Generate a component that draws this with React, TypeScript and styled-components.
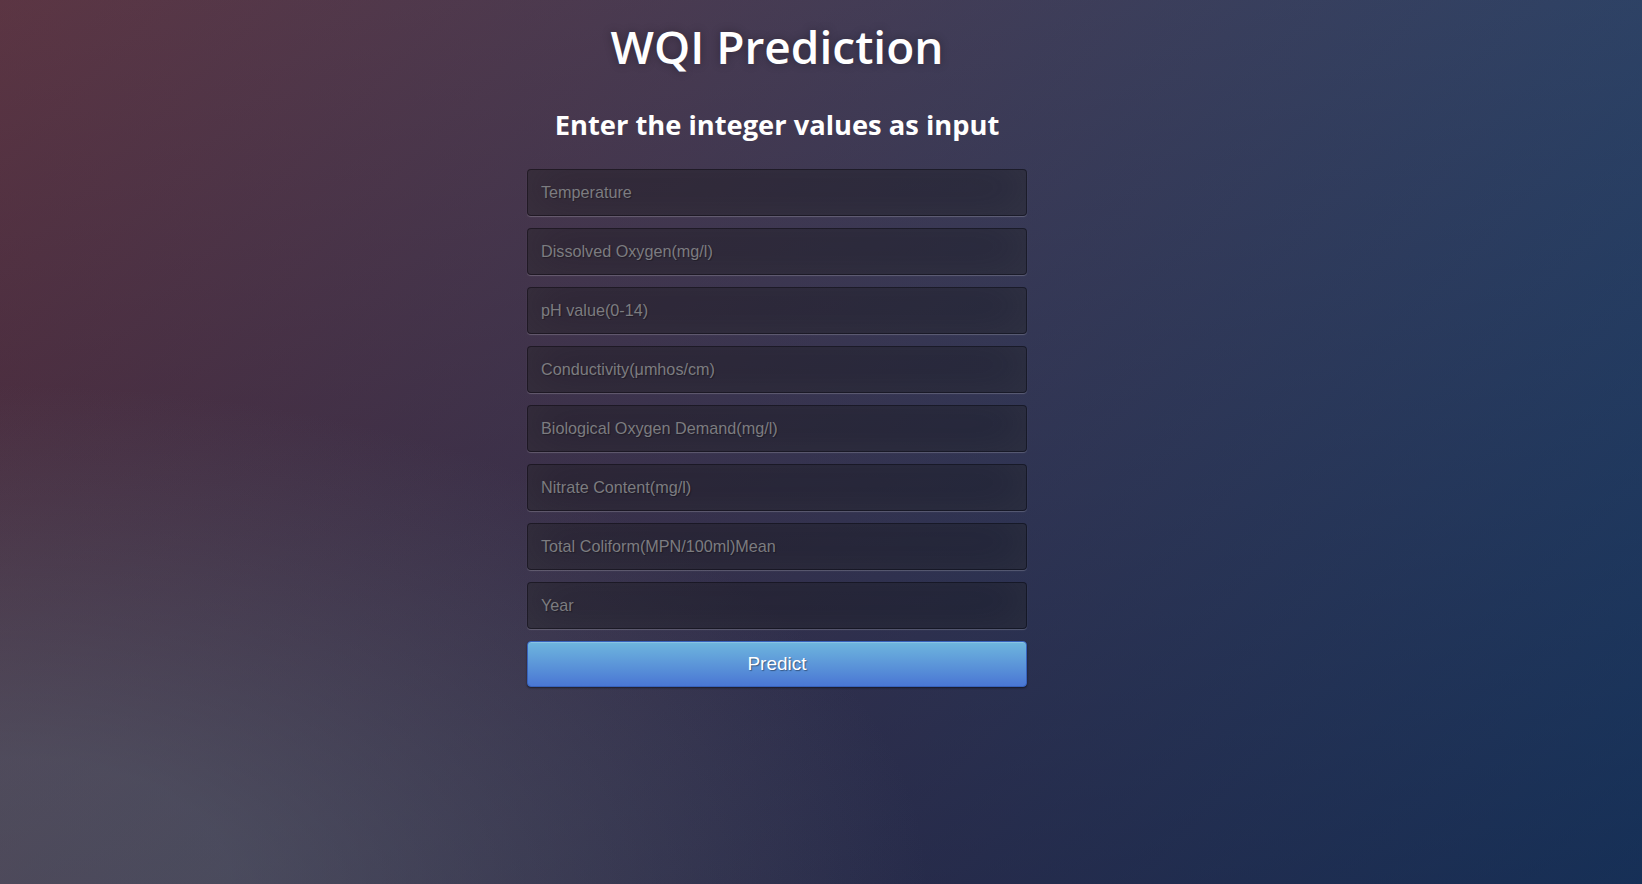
import React from "react";
import styled, { createGlobalStyle } from "styled-components";

const GlobalStyle = createGlobalStyle`
  html, body {
    margin: 0;
    padding: 0;
    width: 100%;
    height: 100%;
  }
  body {
    font-family: "Open Sans", "Liberation Sans", sans-serif;
    background: #092756;
  }
  * { box-sizing: border-box; }
`;

const Page = styled.main`
  min-height: 100vh;
  width: 100%;
  background:
    radial-gradient(ellipse farthest-corner at 0% 100%, rgba(104, 128, 138, 0.4) 10%, rgba(138, 114, 76, 0) 40%),
    linear-gradient(to bottom, rgba(57, 173, 219, 0.25) 0%, rgba(42, 60, 87, 0.4) 100%),
    linear-gradient(135deg, #670d10 0%, #092756 100%);
  padding-top: 19px;
`;

const Panel = styled.section`
  width: 500px;
  margin-left: calc(50% - 294px);
  display: flex;
  flex-direction: column;
  align-items: stretch;
`;

const Title = styled.h1`
  margin: 0;
  font-family: "Open Sans", "Liberation Sans", sans-serif;
  font-size: 46px;
  line-height: 1.2;
  font-weight: 600;
  color: #fff;
  text-align: center;
  text-shadow: 0 0 10px rgba(0, 0, 0, 0.3);
`;

const Subtitle = styled.h2`
  margin: 35px 0 0;
  font-family: "Open Sans", "Liberation Sans", sans-serif;
  font-size: 27.3px;
  line-height: 1.2;
  font-weight: 700;
  color: #fff;
  text-align: center;
`;

const Form = styled.form`
  margin-top: 27px;
  display: flex;
  flex-direction: column;
  gap: 12px;
`;

const Field = styled.input`
  width: 100%;
  height: 47px;
  margin: 0;
  padding: 1px 13px 0;
  font-family: "Liberation Sans", Arial, sans-serif;
  font-size: 16.2px;
  color: #fff;
  background: rgba(0, 0, 0, 0.3);
  border: 1px solid rgba(0, 0, 0, 0.3);
  border-radius: 4px;
  outline: none;
  text-shadow: 1px 1px 1px rgba(0, 0, 0, 0.3);
  box-shadow: inset 0 -5px 45px rgba(100, 100, 100, 0.2), 0 1px 1px rgba(255, 255, 255, 0.2);

  &::placeholder {
    color: #7c7c80;
    opacity: 1;
  }
`;

const PredictButton = styled.button`
  width: 100%;
  height: 46px;
  margin: 0;
  padding: 0;
  font-family: "Liberation Sans", Arial, sans-serif;
  font-size: 19px;
  color: #fff;
  cursor: pointer;
  background-color: #4a77d4;
  background-image: linear-gradient(to bottom, #6eb6de, #4a77d4);
  border: 1px solid #3762bc;
  border-radius: 4px;
  text-shadow: 1px 1px 1px rgba(0, 0, 0, 0.4);
  box-shadow: inset 0 1px 0 rgba(255, 255, 255, 0.2), 0 1px 2px rgba(0, 0, 0, 0.5);
`;

const fields = [
  "Temperature",
  "Dissolved Oxygen(mg/l)",
  "pH value(0-14)",
  "Conductivity(\u03bcmhos/cm)",
  "Biological Oxygen Demand(mg/l)",
  "Nitrate Content(mg/l)",
  "Total Coliform(MPN/100ml)Mean",
  "Year",
];

export default function App() {
  return (
    <>
      <GlobalStyle />
      <Page>
        <Panel>
          <Title>WQI Prediction</Title>
          <Subtitle>Enter the integer values as input</Subtitle>
          <Form onSubmit={(e) => e.preventDefault()}>
            {fields.map((f) => (
              <Field key={f} type="text" name={f} placeholder={f} />
            ))}
            <PredictButton type="submit">Predict</PredictButton>
          </Form>
        </Panel>
      </Page>
    </>
  );
}
